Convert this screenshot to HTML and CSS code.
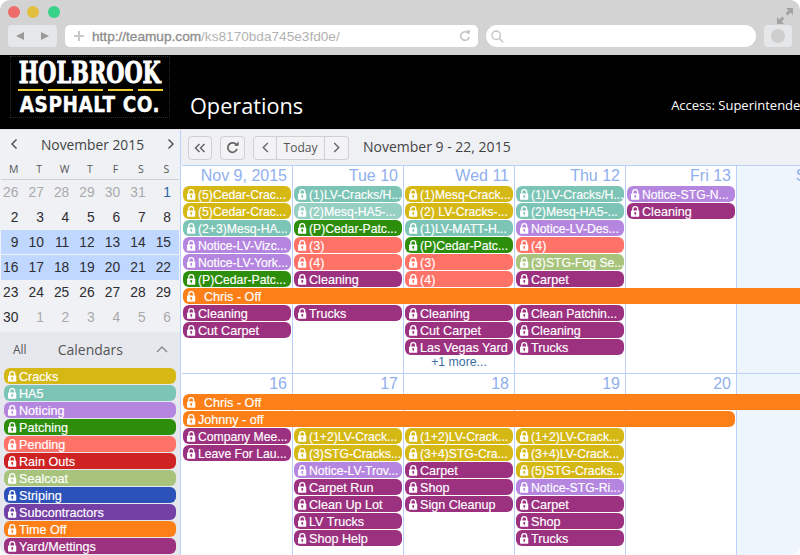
FILE: index.html
```html
<!DOCTYPE html>
<html lang="en">
<head>
<meta charset="utf-8">
<title>Operations</title>
<link rel="stylesheet" href="styles.css">
</head>
<body>
<svg class="sprite" width="0" height="0"><symbol id="lock" viewBox="0 0 9 11"><path fill="#fff" fill-rule="evenodd" d="M2.6 4.4V3a1.9 1.9 0 0 1 3.8 0v1.4h1.4V3A3.3 3.3 0 0 0 1.2 3v1.4H.9a.9.9 0 0 0-.9.9v4.8a.9.9 0 0 0 .9.9h7.2a.9.9 0 0 0 .9-.9V5.3a.9.9 0 0 0-.9-.9zM4.5 6a1.1 1.1 0 0 1 .5 2.1V9.5H4V8.1A1.1 1.1 0 0 1 4.5 6z"/></symbol></svg>
<div class="window">
  <div class="chrome">
    <div class="lights"><i class="light red"></i><i class="light yellow"></i><i class="light green"></i>
      <svg class="expand" width="16" height="16" viewBox="0 0 16 16"><path fill="#a3a3a3" d="M9 0h7v7l-2.4-2.4-2.8 2.8-2.2-2.2 2.8-2.8zM0 16V9l2.4 2.4 2.8-2.8 2.2 2.2-2.8 2.8L7 16z"/></svg>
    </div>
    <div class="bar">
      <div class="navbtns">
        <svg width="10" height="10" viewBox="0 0 10 10"><path fill="#9a9a9a" d="M9 1v8L1 5z"/></svg>
        <svg width="10" height="10" viewBox="0 0 10 10"><path fill="#9a9a9a" d="M1 1v8l8-4z"/></svg>
      </div>
      <div class="url">
        <svg width="10" height="10" viewBox="0 0 10 10"><path fill="#c8c8c8" d="M4 0h2v4h4v2H6v4H4V6H0V4h4z"/></svg>
        <span class="urltext"><b>http://teamup.com</b>/ks8170bda745e3fd0e/</span>
        <svg class="reload" width="12" height="12" viewBox="0 0 12 12"><path fill="none" stroke="#c4c4c4" stroke-width="1.6" d="M9.6 3.6A4.3 4.3 0 1 0 10.2 7"/><path fill="#c4c4c4" d="M7 0l4 .6-.6 4z"/></svg>
      </div>
      <div class="search">
        <svg width="13" height="13" viewBox="0 0 13 13"><circle cx="5.2" cy="5.2" r="4.2" fill="none" stroke="#c4c4c4" stroke-width="1.4"/><path stroke="#c4c4c4" stroke-width="1.6" d="M8.2 8.2l4 4"/></svg>
      </div>
      <div class="rbtn"><i class="dot"></i></div>
    </div>
  </div>
  <header class="banner">
    <div class="logo">
      <div class="logo-top">HOLBROOK</div>
      <div class="dashes"><i></i><i></i><i></i><i></i><i></i></div>
      <div class="logo-bot">ASPHALT CO.</div>
    </div>
    <h1 class="title">Operations</h1>
    <div class="access">Access: Superintendent</div>
  </header>
  <div class="app">
    <aside class="side">
      <div class="mini">
        <div class="mini-head">
          <svg width="8" height="12" viewBox="0 0 8 12"><path fill="none" stroke="#555" stroke-width="1.5" d="M6.5 1.5L2 6l4.500 4.500"/></svg>
          <span>November 2015</span>
          <svg width="8" height="12" viewBox="0 0 8 12"><path fill="none" stroke="#555" stroke-width="1.5" d="M1.500 1.500L6 6l-4.500 4.500"/></svg>
        </div>
        <div class="dow"><span>M</span><span>T</span><span>W</span><span>T</span><span>F</span><span>S</span><span>S</span></div>
        <div class="dates">
          <span class="o">26</span><span class="o">27</span><span class="o">28</span><span class="o">29</span><span class="o">30</span><span class="o">31</span><span class="first">1</span>
          <span>2</span><span>3</span><span>4</span><span>5</span><span>6</span><span>7</span><span>8</span>
          <span class="s">9</span><span class="s">10</span><span class="s">11</span><span class="s">12</span><span class="s">13</span><span class="s">14</span><span class="s">15</span>
          <span class="s">16</span><span class="s">17</span><span class="s">18</span><span class="s">19</span><span class="s">20</span><span class="s">21</span><span class="s">22</span>
          <span>23</span><span>24</span><span>25</span><span>26</span><span>27</span><span>28</span><span>29</span>
          <span>30</span><span class="o">1</span><span class="o">2</span><span class="o">3</span><span class="o">4</span><span class="o">5</span><span class="o">6</span>
        </div>
      </div>
      <div class="cals">
        <div class="cals-head">
          <span class="all">All</span><span class="cals-title">Calendars</span>
          <svg width="12" height="7" viewBox="0 0 12 7"><path fill="none" stroke="#888" stroke-width="1.400" d="M1 6l5-5 5 5"/></svg>
        </div>
        <div class="cal-list">
          <div class="ev cracks"><svg class="lk"><use href="#lock"/></svg><span>Cracks</span></div>
          <div class="ev ha5"><svg class="lk"><use href="#lock"/></svg><span>HA5</span></div>
          <div class="ev notice"><svg class="lk"><use href="#lock"/></svg><span>Noticing</span></div>
          <div class="ev patching"><svg class="lk"><use href="#lock"/></svg><span>Patching</span></div>
          <div class="ev pending"><svg class="lk"><use href="#lock"/></svg><span>Pending</span></div>
          <div class="ev rain"><svg class="lk"><use href="#lock"/></svg><span>Rain Outs</span></div>
          <div class="ev sealcoat"><svg class="lk"><use href="#lock"/></svg><span>Sealcoat</span></div>
          <div class="ev striping"><svg class="lk"><use href="#lock"/></svg><span>Striping</span></div>
          <div class="ev sub"><svg class="lk"><use href="#lock"/></svg><span>Subcontractors</span></div>
          <div class="ev timeoff"><svg class="lk"><use href="#lock"/></svg><span>Time Off</span></div>
          <div class="ev yard"><svg class="lk"><use href="#lock"/></svg><span>Yard/Mettings</span></div>
        </div>
      </div>
    </aside>
    <main class="main">
      <div class="toolbar">
        <button class="btn"><svg width="12" height="10" viewBox="0 0 12 10"><path fill="none" stroke="#666" stroke-width="1.500" d="M5.500 1L1.500 5l4 4M10.500 1l-4 4 4 4"/></svg></button>
        <button class="btn refresh"><svg width="13" height="13" viewBox="0 0 13 13"><path fill="none" stroke="#666" stroke-width="1.800" d="M10.800 4.600A4.700 4.700 0 1 0 11 8"/><path fill="#666" d="M8.200 4.800h4.500V.6z"/></svg></button>
        <div class="group">
          <button class="btn seg"><svg width="7" height="11" viewBox="0 0 7 11"><path fill="none" stroke="#666" stroke-width="1.400" d="M5.800 1L1.300 5.500l4.500 4.500"/></svg></button>
          <button class="btn seg today">Today</button>
          <button class="btn seg"><svg width="7" height="11" viewBox="0 0 7 11"><path fill="none" stroke="#666" stroke-width="1.400" d="M1.200 1l4.500 4.500L1.200 10"/></svg></button>
        </div>
        <div class="range">November 9 - 22, 2015</div>
      </div>
      <div class="week wk1">
        <div class="cell c1">Nov 9, 2015</div><div class="cell c2">Tue 10</div><div class="cell c3">Wed 11</div><div class="cell c4">Thu 12</div><div class="cell c5">Fri 13</div><div class="cell c6 we">Sat 14</div><div class="cell c7 we">Sun 15</div>

        <div class="ev cracks c1 r1"><svg class="lk"><use href="#lock"/></svg><span class="t">(5)Cedar-Crac...</span></div>
        <div class="ev cracks c1 r2"><svg class="lk"><use href="#lock"/></svg><span class="t">(5)Cedar-Crac...</span></div>
        <div class="ev ha5 c1 r3"><svg class="lk"><use href="#lock"/></svg><span class="t">(2+3)Mesq-HA...</span></div>
        <div class="ev notice c1 r4"><svg class="lk"><use href="#lock"/></svg><span class="t">Notice-LV-Vizc...</span></div>
        <div class="ev notice c1 r5"><svg class="lk"><use href="#lock"/></svg><span class="t">Notice-LV-York...</span></div>
        <div class="ev patching c1 r6"><svg class="lk"><use href="#lock"/></svg><span class="t">(P)Cedar-Patc...</span></div>
        <div class="ev yard c1 r8"><svg class="lk"><use href="#lock"/></svg><span>Cleaning</span></div>
        <div class="ev yard c1 r9"><svg class="lk"><use href="#lock"/></svg><span>Cut Carpet</span></div>

        <div class="ev ha5 c2 r1"><svg class="lk"><use href="#lock"/></svg><span class="t">(1)LV-Cracks/H...</span></div>
        <div class="ev ha5 pale c2 r2"><svg class="lk"><use href="#lock"/></svg><span class="t">(2)Mesq-HA5-...</span></div>
        <div class="ev patching c2 r3"><svg class="lk"><use href="#lock"/></svg><span class="t">(P)Cedar-Patc...</span></div>
        <div class="ev pending c2 r4"><svg class="lk"><use href="#lock"/></svg><span>(3)</span></div>
        <div class="ev pending c2 r5"><svg class="lk"><use href="#lock"/></svg><span>(4)</span></div>
        <div class="ev yard c2 r6"><svg class="lk"><use href="#lock"/></svg><span>Cleaning</span></div>
        <div class="ev yard c2 r8"><svg class="lk"><use href="#lock"/></svg><span>Trucks</span></div>

        <div class="ev cracks c3 r1"><svg class="lk"><use href="#lock"/></svg><span class="t">(1)Mesq-Crack...</span></div>
        <div class="ev cracks c3 r2"><svg class="lk"><use href="#lock"/></svg><span class="t">(2) LV-Cracks-...</span></div>
        <div class="ev ha5 c3 r3"><svg class="lk"><use href="#lock"/></svg><span class="t">(1)LV-MATT-H...</span></div>
        <div class="ev patching c3 r4"><svg class="lk"><use href="#lock"/></svg><span class="t">(P)Cedar-Patc...</span></div>
        <div class="ev pending c3 r5"><svg class="lk"><use href="#lock"/></svg><span>(3)</span></div>
        <div class="ev pending c3 r6"><svg class="lk"><use href="#lock"/></svg><span>(4)</span></div>
        <div class="ev yard c3 r8"><svg class="lk"><use href="#lock"/></svg><span>Cleaning</span></div>
        <div class="ev yard c3 r9"><svg class="lk"><use href="#lock"/></svg><span>Cut Carpet</span></div>
        <div class="ev yard c3 r10"><svg class="lk"><use href="#lock"/></svg><span>Las Vegas Yard</span></div>
        <div class="more c3 r11">+1 more...</div>

        <div class="ev ha5 c4 r1"><svg class="lk"><use href="#lock"/></svg><span class="t">(1)LV-Cracks/H...</span></div>
        <div class="ev ha5 c4 r2"><svg class="lk"><use href="#lock"/></svg><span class="t">(2)Mesq-HA5-...</span></div>
        <div class="ev notice c4 r3"><svg class="lk"><use href="#lock"/></svg><span class="t">Notice-LV-Des...</span></div>
        <div class="ev pending c4 r4"><svg class="lk"><use href="#lock"/></svg><span>(4)</span></div>
        <div class="ev sealcoat c4 r5"><svg class="lk"><use href="#lock"/></svg><span class="t">(3)STG-Fog Se...</span></div>
        <div class="ev yard c4 r6"><svg class="lk"><use href="#lock"/></svg><span>Carpet</span></div>
        <div class="ev yard c4 r8"><svg class="lk"><use href="#lock"/></svg><span class="t">Clean Patchin...</span></div>
        <div class="ev yard c4 r9"><svg class="lk"><use href="#lock"/></svg><span>Cleaning</span></div>
        <div class="ev yard c4 r10"><svg class="lk"><use href="#lock"/></svg><span>Trucks</span></div>

        <div class="ev notice c5 r1"><svg class="lk"><use href="#lock"/></svg><span class="t">Notice-STG-N...</span></div>
        <div class="ev yard c5 r2"><svg class="lk"><use href="#lock"/></svg><span>Cleaning</span></div>

        <div class="ev timeoff span7 r7 indent"><svg class="lk"><use href="#lock"/></svg><span>Chris - Off</span></div>
      </div>
      <div class="week wk2">
        <div class="cell c1">16</div><div class="cell c2">17</div><div class="cell c3">18</div><div class="cell c4">19</div><div class="cell c5">20</div><div class="cell c6 we">21</div><div class="cell c7 we">22</div>

        <div class="ev timeoff span7 r1 indent"><svg class="lk"><use href="#lock"/></svg><span>Chris - Off</span></div>
        <div class="ev timeoff span5 r2"><svg class="lk"><use href="#lock"/></svg><span>Johnny - off</span></div>

        <div class="ev yard c1 r3"><svg class="lk"><use href="#lock"/></svg><span class="t">Company Mee...</span></div>
        <div class="ev yard c1 r4"><svg class="lk"><use href="#lock"/></svg><span class="t">Leave For Lau...</span></div>

        <div class="ev cracks c2 r3"><svg class="lk"><use href="#lock"/></svg><span class="t">(1+2)LV-Crack...</span></div>
        <div class="ev cracks c2 r4"><svg class="lk"><use href="#lock"/></svg><span class="t">(3)STG-Cracks...</span></div>
        <div class="ev notice c2 r5"><svg class="lk"><use href="#lock"/></svg><span class="t">Notice-LV-Trov...</span></div>
        <div class="ev yard c2 r6"><svg class="lk"><use href="#lock"/></svg><span>Carpet Run</span></div>
        <div class="ev yard c2 r7"><svg class="lk"><use href="#lock"/></svg><span>Clean Up Lot</span></div>
        <div class="ev yard c2 r8"><svg class="lk"><use href="#lock"/></svg><span>LV Trucks</span></div>
        <div class="ev yard c2 r9"><svg class="lk"><use href="#lock"/></svg><span>Shop Help</span></div>

        <div class="ev cracks c3 r3"><svg class="lk"><use href="#lock"/></svg><span class="t">(1+2)LV-Crack...</span></div>
        <div class="ev cracks c3 r4"><svg class="lk"><use href="#lock"/></svg><span class="t">(3+4)STG-Cra...</span></div>
        <div class="ev yard c3 r5"><svg class="lk"><use href="#lock"/></svg><span>Carpet</span></div>
        <div class="ev yard c3 r6"><svg class="lk"><use href="#lock"/></svg><span>Shop</span></div>
        <div class="ev yard c3 r7"><svg class="lk"><use href="#lock"/></svg><span>Sign Cleanup</span></div>

        <div class="ev cracks c4 r3"><svg class="lk"><use href="#lock"/></svg><span class="t">(1+2)LV-Crack...</span></div>
        <div class="ev cracks c4 r4"><svg class="lk"><use href="#lock"/></svg><span class="t">(3+4)LV-Crack...</span></div>
        <div class="ev cracks c4 r5"><svg class="lk"><use href="#lock"/></svg><span class="t">(5)STG-Cracks...</span></div>
        <div class="ev notice c4 r6"><svg class="lk"><use href="#lock"/></svg><span class="t">Notice-STG-Ri...</span></div>
        <div class="ev yard c4 r7"><svg class="lk"><use href="#lock"/></svg><span>Carpet</span></div>
        <div class="ev yard c4 r8"><svg class="lk"><use href="#lock"/></svg><span>Shop</span></div>
        <div class="ev yard c4 r9"><svg class="lk"><use href="#lock"/></svg><span>Trucks</span></div>
      </div>
    </main>
  </div>
</div>
</body>
</html>
```
FILE: styles.css
```css
* { box-sizing: border-box; }
html, body { margin: 0; height: 555px; overflow: hidden; background: #fff; }
.sprite { display: block; position: absolute; }
.window { width: 800px; height: 555px; border-radius: 10px; overflow: hidden; display: flex; flex-direction: column; font-family: "Open Sans", sans-serif; color: #333; }

.chrome { height: 55px; background: #d3d3d3; flex: none; padding: 6px 8px 0; }
.lights { height: 19px; display: flex; align-items: flex-start; position: relative; }
.light { width: 12px; height: 12px; border-radius: 50%; }
.red { background: #ee6b6b; margin-right: 7px; }
.yellow { background: #e2bf3e; margin-right: 9px; }
.green { background: #38d388; }
.expand { position: absolute; right: -1px; top: 2px; }
.bar { display: flex; height: 22px; }
.navbtns { width: 49px; background: #e6e7e8; border-radius: 4px; display: flex; align-items: center; justify-content: space-between; padding: 0 7px; }
.url { width: 413px; margin-left: 8px; background: #fff; border-radius: 5px; display: flex; align-items: center; padding: 0 7px 0 9px; }
.urltext { margin-left: 8px; font: 13.640px "Liberation Sans", sans-serif; color: #b2b2b2; white-space: nowrap; }
.urltext b { color: #8f8f8f; font-weight: 400; -webkit-text-stroke: .35px #8f8f8f; }
.reload { margin-left: auto; }
.search { width: 270px; margin-left: 8px; background: #fff; border-radius: 11px; display: flex; align-items: center; padding-left: 5px; }
.rbtn { width: 28px; margin-left: 8px; background: #e6e7e8; border-radius: 4px; display: flex; align-items: center; justify-content: center; }
.dot { width: 14px; height: 14px; border-radius: 50%; background: #cecece; }

.banner { height: 74px; background: #000; flex: none; display: flex; align-items: flex-start; color: #fff; position: relative; }
.logo { width: 160px; height: 62px; margin: 1px 0 0 10px; border: 1px dotted #2c2c2c; display: flex; flex-direction: column; align-items: center; flex: none; overflow: hidden; }
.logo-top { font: 700 29px/24px "DejaVu Serif", serif; height: 27px; padding-top: 4px; white-space: nowrap; transform: scaleX(.72); -webkit-text-stroke: 1px #fff; }
.dashes { display: flex; gap: 5px; margin-top: 5px; }
.dashes i { width: 25px; height: 2px; background: #f0cf2b; }
.logo-bot { font: 700 20.500px/20px "DejaVu Sans", sans-serif; margin-top: 4px; letter-spacing: .6px; white-space: nowrap; transform: scaleX(.9); -webkit-text-stroke: .4px #fff; }
.title { font: 400 21.700px/27px "Open Sans", sans-serif; margin: 37px 0 0 20px; white-space: nowrap; }
.access { font-size: 13px; line-height: 18px; margin: 41px 0 0 368px; white-space: nowrap; flex: none; }

.app { flex: 1; display: flex; min-height: 0; background: #eff0f4; border-top: 1px solid #e4e4e6; }
.side { width: 180px; flex: none; display: flex; flex-direction: column; }
.mini { height: 202px; padding-left: 1px; background: #eff1f5; flex: none; }
.mini-head { height: 28px; display: flex; align-items: center; justify-content: space-between; padding: 0 5px 0 9px; font-size: 13.800px; color: #444; }
.dow { display: grid; grid-template-columns: repeat(7, 1fr); height: 22px; border-bottom: 1px solid #cfcfcf; font-size: 10.500px; line-height: 23px; color: #555; text-align: center; width: 178px; }
.dates { display: grid; grid-template-columns: repeat(7, 1fr); grid-auto-rows: 25px; width: 178px; font: 13.800px/26px "Liberation Sans", sans-serif; color: #2d2d33; }
.dates span { text-align: right; padding-right: 8px; border-bottom: 1px solid transparent; }
.dates .o { color: #aaa; }
.dates .first { color: #2a62a8; }
.dates .s { background: #c0d7ff; border-bottom-color: #eff1f5; }
.dates .s:nth-child(n+22) { border-bottom-color: transparent; }

.cals { flex: 1; background: #e6e8ed; padding: 0 4px; }
.cals-head { height: 36px; display: flex; align-items: center; padding-bottom: 1px; }
.all { font-size: 12px; color: #555; margin-left: 9px; }
.cals-title { font-size: 14px; color: #555; margin-left: 31px; }
.cals-head svg { margin-left: auto; margin-right: 8px; }
.cal-list { display: flex; flex-direction: column; gap: 1px; }

.ev { height: 16px; border-radius: 6px; display: flex; align-items: flex-start; gap: 2.500px; padding-left: 4px; color: #fff; font: 12.600px/18px "Liberation Sans", sans-serif; min-width: 0; overflow: hidden; -webkit-text-stroke: .15px #fff; }
.ev span { white-space: nowrap; height: 16px; }
.ev .t { font-size: 12.200px; }
.lk { width: 8.500px; height: 11px; flex: none; margin-top: 3px; }
.indent span { margin-left: 6px; }
.cracks { background: #d6b815; }
.ha5 { background: #7cc4b5; }
.pale { background: #96d0c3; }
.notice { background: #b586e0; }
.patching { background: #2c8e0b; }
.pending { background: #ff7267; }
.rain { background: #cf2222; }
.sealcoat { background: #a8c47c; }
.striping { background: #2a52b8; }
.sub { background: #7440a6; }
.timeoff { background: #fc7f17; }
.yard { background: #9c3180; }

.main { flex: 1; min-width: 0; overflow: hidden; display: flex; flex-direction: column; border-left: 1px solid #b9d1fb; background: #fff; }
.toolbar { height: 35px; flex: none; display: flex; align-items: center; padding: 0 0 0 7px; background: #eff0f4; }
.btn { height: 24px; width: 24px; padding: 0; border: 1px solid #d0d0d2; border-radius: 4px; background: #f3f3f5; display: flex; align-items: center; justify-content: center; color: #555; font: 12px "Open Sans", sans-serif; }
.refresh { margin-left: 8px; width: 25px; }
.group { display: flex; margin-left: 8px; }
.seg { border-radius: 0; }
.seg:first-child { border-radius: 4px 0 0 4px; }
.seg:last-child { border-radius: 0 4px 4px 0; border-left: 0; }
.today { width: 48px; border-left: 0; }
.range { margin: 0 0 2px 14px; font-size: 14px; color: #444; white-space: nowrap; }

.week { display: grid; grid-template-columns: repeat(7, 111px); width: 777px; margin-left: 1px; flex: none; }
.wk1 { height: 208px; grid-template-rows: 20px repeat(11, 17px); border-top: 1px solid #b9d1fb; }
.wk2 { flex: 1; grid-template-rows: 20px repeat(10, 17px); border-top: 1px solid #b9d1fb; }
.cell { grid-row: 1 / -1; border-right: 1px solid #b9d1fb; text-align: right; padding-right: 5px; font: 16px/20px "Liberation Sans", sans-serif; color: #8fb0ee; white-space: nowrap; }
.we { background: #eef5fd; }
.c1 { grid-column: 1; } .c2 { grid-column: 2; } .c3 { grid-column: 3; } .c4 { grid-column: 4; } .c5 { grid-column: 5; } .c6 { grid-column: 6; } .c7 { grid-column: 7; }
.ev.c1, .ev.c2, .ev.c3, .ev.c4, .ev.c5 { margin: 0 2px 1px 1px; }
.span7 { grid-column: 1 / 8; margin: 0 0 1px 1px; border-radius: 6px 0 0 6px; }
.span5 { grid-column: 1 / 6; margin: 0 2px 1px 1px; }
.r1 { grid-row: 2; } .r2 { grid-row: 3; } .r3 { grid-row: 4; } .r4 { grid-row: 5; } .r5 { grid-row: 6; } .r6 { grid-row: 7; } .r7 { grid-row: 8; } .r8 { grid-row: 9; } .r9 { grid-row: 10; } .r10 { grid-row: 11; } .r11 { grid-row: 12; }
.more { text-align: center; font: 12.300px/13px "Liberation Sans", sans-serif; color: #3d6ea5; padding-right: 1px; }
```
